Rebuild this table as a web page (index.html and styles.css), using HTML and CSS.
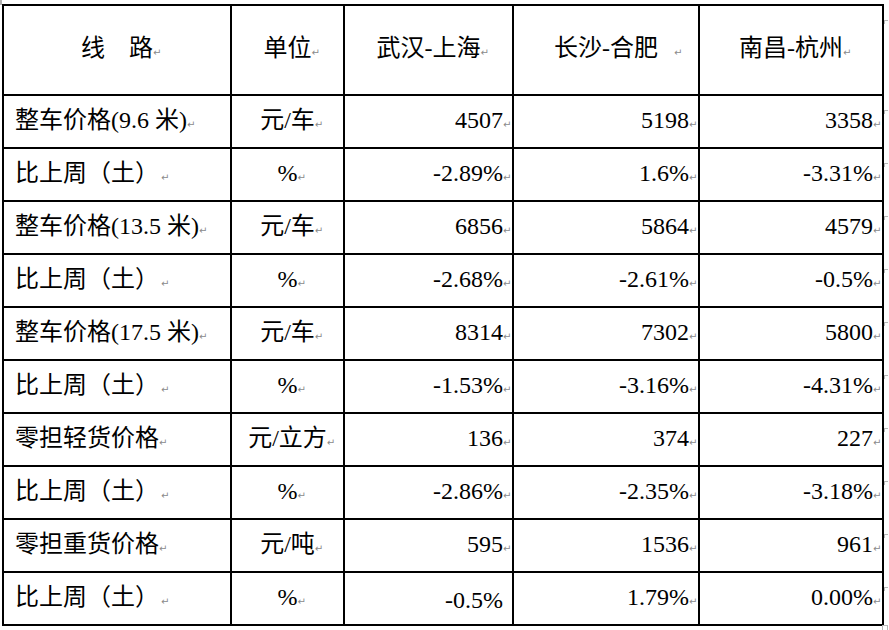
FILE: index.html
```html
<!DOCTYPE html>
<html lang="zh">
<head>
<meta charset="utf-8">
<title>运价表</title>
<link rel="stylesheet" href="styles.css">
</head>
<body>
<div class="corner"></div>
<div class="page">
<table class="rates">
<colgroup>
<col class="c1"><col class="c2"><col class="c3"><col class="c4"><col class="c5">
</colgroup>
<thead>
<tr class="head">
<th class="ctr">线　路<span class="pm">↵</span></th>
<th class="ctr">单位<span class="pm">↵</span></th>
<th class="ctr">武汉-上海<span class="pm">↵</span></th>
<th class="ctr">长沙-合肥<span class="pm sp">↵</span></th>
<th class="ctr last">南昌-杭州<span class="pm">↵</span></th>
</tr>
</thead>
<tbody>
<tr><td class="lbl">整车价格(9.6 米)<span class="pm">↵</span></td><td class="ctr">元/车<span class="pm">↵</span></td><td class="num">4507<span class="pm">↵</span></td><td class="num">5198<span class="pm">↵</span></td><td class="num last">3358<span class="pm">↵</span></td></tr>
<tr><td class="lbl">比上周（土）<span class="pm sp2">↵</span></td><td class="ctr">%<span class="pm">↵</span></td><td class="num">-2.89%<span class="pm">↵</span></td><td class="num">1.6%<span class="pm">↵</span></td><td class="num last">-3.31%<span class="pm">↵</span></td></tr>
<tr><td class="lbl">整车价格(13.5 米)<span class="pm">↵</span></td><td class="ctr">元/车<span class="pm">↵</span></td><td class="num">6856<span class="pm">↵</span></td><td class="num">5864<span class="pm">↵</span></td><td class="num last">4579<span class="pm">↵</span></td></tr>
<tr><td class="lbl">比上周（土）<span class="pm sp2">↵</span></td><td class="ctr">%<span class="pm">↵</span></td><td class="num">-2.68%<span class="pm">↵</span></td><td class="num">-2.61%<span class="pm">↵</span></td><td class="num last">-0.5%<span class="pm">↵</span></td></tr>
<tr><td class="lbl">整车价格(17.5 米)<span class="pm">↵</span></td><td class="ctr">元/车<span class="pm">↵</span></td><td class="num">8314<span class="pm">↵</span></td><td class="num">7302<span class="pm">↵</span></td><td class="num last">5800<span class="pm">↵</span></td></tr>
<tr><td class="lbl">比上周（土）<span class="pm sp2">↵</span></td><td class="ctr">%<span class="pm">↵</span></td><td class="num">-1.53%<span class="pm">↵</span></td><td class="num">-3.16%<span class="pm">↵</span></td><td class="num last">-4.31%<span class="pm">↵</span></td></tr>
<tr><td class="lbl">零担轻货价格<span class="pm">↵</span></td><td class="ctr">元/立方<span class="pm">↵</span></td><td class="num">136<span class="pm">↵</span></td><td class="num">374<span class="pm">↵</span></td><td class="num last">227<span class="pm">↵</span></td></tr>
<tr><td class="lbl">比上周（土）<span class="pm sp2">↵</span></td><td class="ctr">%<span class="pm">↵</span></td><td class="num">-2.86%<span class="pm">↵</span></td><td class="num">-2.35%<span class="pm">↵</span></td><td class="num last">-3.18%<span class="pm">↵</span></td></tr>
<tr><td class="lbl">零担重货价格<span class="pm">↵</span></td><td class="ctr">元/吨<span class="pm">↵</span></td><td class="num">595<span class="pm">↵</span></td><td class="num">1536<span class="pm">↵</span></td><td class="num last">961<span class="pm">↵</span></td></tr>
<tr><td class="lbl">比上周（土）<span class="pm sp2">↵</span></td><td class="ctr">%<span class="pm">↵</span></td><td class="num">-0.5%</td><td class="num">1.79%<span class="pm">↵</span></td><td class="num last">0.00%<span class="pm">↵</span></td></tr>
</tbody>
</table>
<div class="endmark"></div>
</div>
</body>
</html>
```

FILE: styles.css
```css
html, body {
  margin: 0;
  padding: 0;
  background: #ffffff;
}

body {
  font-family: "Liberation Serif", "Noto Sans CJK SC", serif;
  color: #000000;
  width: 889px;
  height: 630px;
  overflow: hidden;
  position: relative;
}

.corner {
  position: absolute;
  left: 0;
  top: 0;
  width: 2px;
  height: 5px;
  background: #b0b0b0;
}

.page {
  padding: 4px 0 0 2px;
  position: relative;
}

.rates {
  border-collapse: collapse;
  table-layout: fixed;
  width: 882px;
  font-size: 24px;
  font-weight: 400;
}

.c1 { width: 228px; }
.c2 { width: 113px; }
.c3 { width: 169px; }
.c4 { width: 186px; }
.c5 { width: 184px; }

.rates th,
.rates td {
  border: 2px solid #000000;
  padding: 0;
  vertical-align: middle;
  white-space: nowrap;
  font-weight: 400;
  line-height: 28px;
  position: relative;
}

.head th {
  height: 88px;
}

.rates tbody td {
  height: 49px;
  padding-top: 2px;
}

.ctr {
  text-align: center;
}

.lbl {
  text-align: left;
  padding-left: 11px !important;
}

.num {
  text-align: right;
  padding-right: 9px !important;
}

.pm {
  display: inline-block;
  width: 0;
  overflow: visible;
  font-family: "DejaVu Sans", sans-serif;
  font-size: 10px;
  color: #8a8a8a;
  vertical-align: baseline;
  white-space: nowrap;
}

.pm.sp {
  transform: translateX(16px);
}

.pm.sp2 {
  transform: translateX(2px);
}

.last::after {
  content: "";
  position: absolute;
  right: -6px;
  top: 14px;
  width: 3px;
  height: 3px;
  border-top: 1px solid #b8b8b8;
  border-left: 1px solid #b8b8b8;
}

.endmark {
  position: absolute;
  left: 882px;
  top: 625px;
  width: 4px;
  height: 4px;
  border: 1px solid #b8b8b8;
}
```
